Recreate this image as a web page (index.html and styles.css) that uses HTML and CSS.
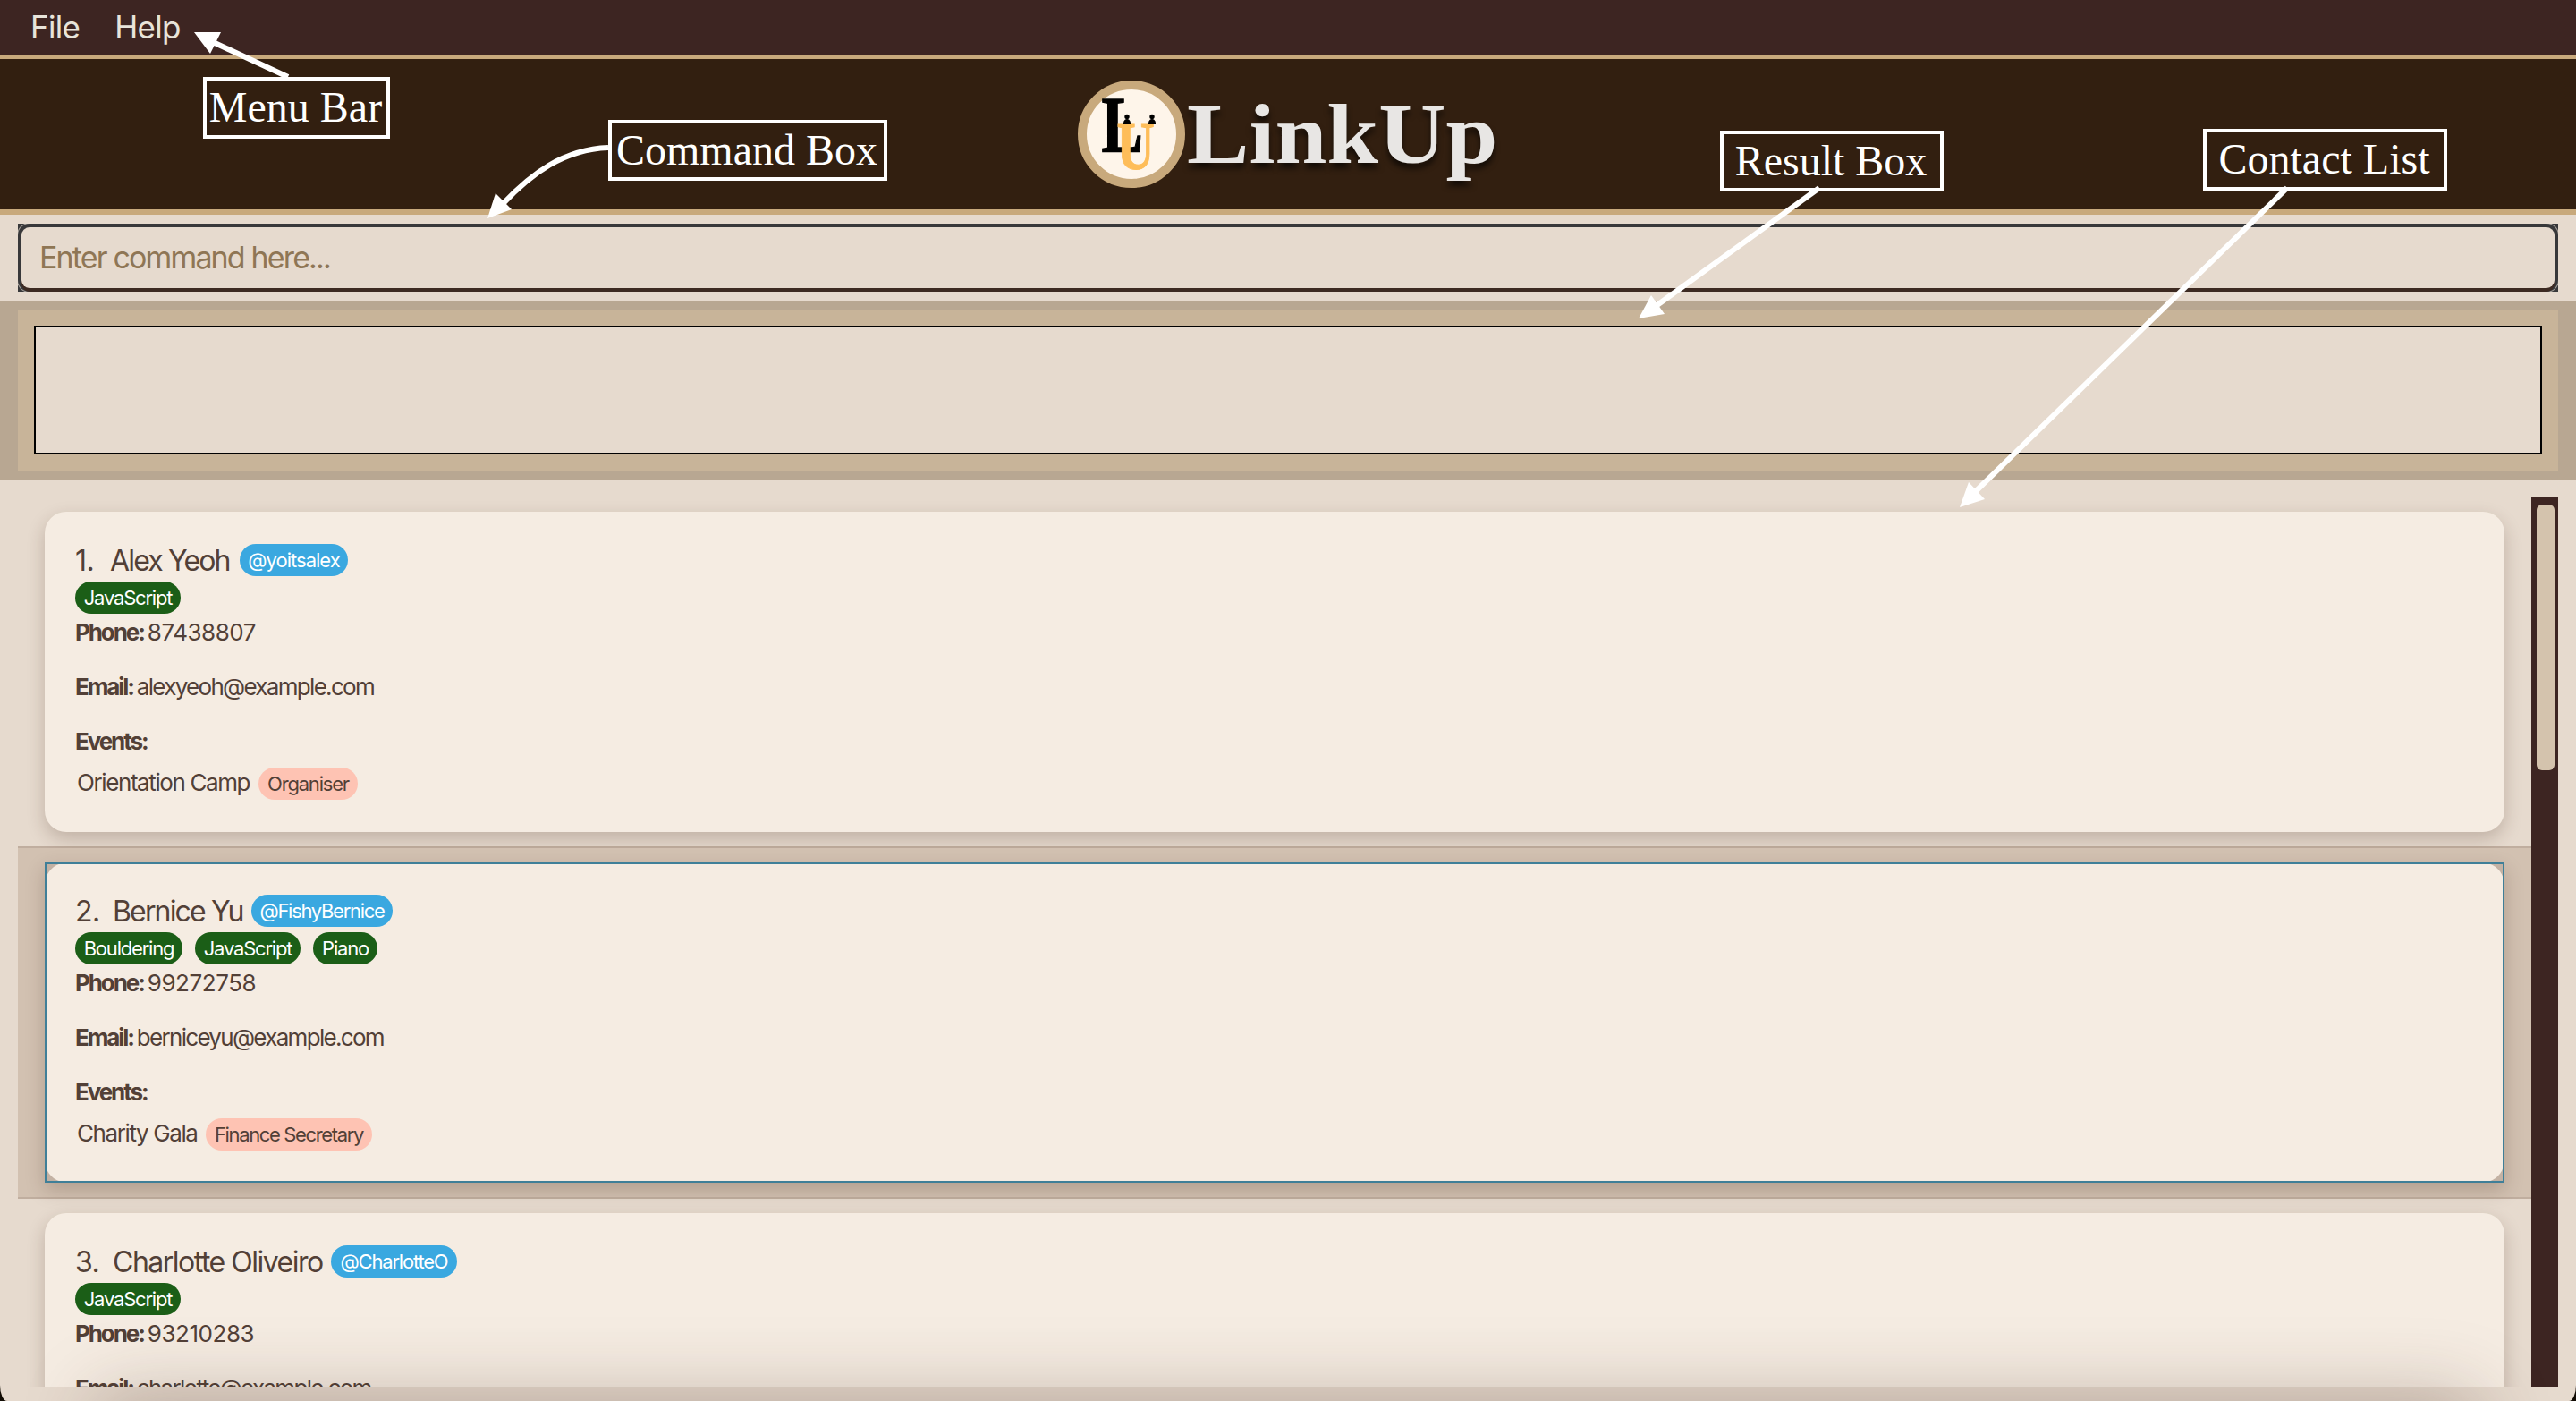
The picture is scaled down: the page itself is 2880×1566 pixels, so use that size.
FILE: index.html
```html
<!DOCTYPE html>
<html lang="en">
<head>
<meta charset="utf-8">
<title>LinkUp</title>
<link rel="stylesheet" href="styles.css">
</head>
<body>
<div class="app">
  <nav class="menu"><span class="file">File</span><span class="help">Help</span></nav>
  <header class="header">
    <svg class="logo" viewBox="0 0 120 120">
      <circle cx="60" cy="60" r="55" fill="#fef5ea" stroke="#c8a97c" stroke-width="10"/>
      <text class="logo-letter" transform="translate(26.500 79) scale(.78 1)" font-size="89" fill="#000" stroke="#000" stroke-width="1.400">L</text>
      <text class="logo-letter" transform="translate(43.500 98.500) scale(.77 1)" font-size="76" fill="#febd59" stroke="#febd59" stroke-width="1">U</text>
      <g fill="#000">
        <circle cx="55" cy="40.500" r="2.700"/><path d="M51 49v-2q1-4 4-4t4 4v2z"/>
        <circle cx="83" cy="40.500" r="2.700"/><path d="M79 49v-2q1-4 4-4t4 4v2z"/>
      </g>
    </svg>
    <h1 class="brand">LinkUp</h1>
  </header>
  <div class="command"><div class="command-box"><div class="command-input">Enter command here...</div></div></div>
  <section class="result"><div class="result-frame"><div class="result-box"></div></div></section>
  <main class="contacts">
    <div class="list">
      <div class="cell"><article class="card">
        <div class="title"><span class="num">1.</span><span class="name n1">Alex Yeoh</span><span class="pill handle h1">@yoitsalex</span></div>
        <div class="tags"><span class="pill tag js">JavaScript</span></div>
        <p class="field phone"><b>Phone:</b><span class="digits">87438807</span></p>
        <p class="field email"><b>Email:</b><span>alexyeoh@example.com</span></p>
        <p class="field events"><b>Events:</b></p>
        <div class="event"><span class="ev1">Orientation Camp</span><span class="pill role r1">Organiser</span></div>
      </article></div>
      <div class="cell selected"><article class="card">
        <div class="title"><span class="num wide">2.</span><span class="name n2">Bernice Yu</span><span class="pill handle h2">@FishyBernice</span></div>
        <div class="tags"><span class="pill tag bo">Bouldering</span><span class="pill tag js">JavaScript</span><span class="pill tag pi">Piano</span></div>
        <p class="field phone"><b>Phone:</b><span class="digits">99272758</span></p>
        <p class="field email"><b>Email:</b><span>berniceyu@example.com</span></p>
        <p class="field events"><b>Events:</b></p>
        <div class="event"><span class="ev2">Charity Gala</span><span class="pill role r2">Finance Secretary</span></div>
      </article></div>
      <div class="cell"><article class="card">
        <div class="title"><span class="num wide">3.</span><span class="name n3">Charlotte Oliveiro</span><span class="pill handle h3">@CharlotteO</span></div>
        <div class="tags"><span class="pill tag js">JavaScript</span></div>
        <p class="field phone"><b>Phone:</b><span class="digits">93210283</span></p>
        <p class="field email"><b>Email:</b><span>charlotte@example.com</span></p>
      </article></div>
    </div>
    <div class="scrollbar"><div class="thumb"></div></div>
  </main>
  <div class="bottom-shade"></div>
</div>
<svg class="arrows" viewBox="0 0 2880 1566">
  <g fill="none" stroke="#fff" stroke-width="6">
    <path d="M322 86L238 47"/>
    <path d="M680 165C630 167 594 194 562 228"/>
    <path d="M2034 210L1850 343"/>
    <path d="M2557 210L2208 550"/>
  </g>
  <g fill="#fff">
    <path d="M217 36H247L235 60z"/>
    <path d="M545 244L554 216L572 234z"/>
    <path d="M1832 356L1846 330L1861 351z"/>
    <path d="M2191 567L2201 539L2219 558z"/>
  </g>
</svg>
<div class="label menu-label">Menu Bar</div>
<div class="label command-label">Command Box</div>
<div class="label result-label">Result Box</div>
<div class="label list-label">Contact List</div>
</body>
</html>
```
FILE: styles.css
```css
* { box-sizing: border-box; }
html { background: #120c04; }
body { margin: 0; width: 2880px; height: 1566px; position: relative; overflow: hidden; font-family: Inter, "Liberation Sans", sans-serif; }
.app { position: relative; width: 2880px; height: 1566px; display: flex; flex-direction: column; background: #e6dace; border-radius: 0 0 8px 8px / 0 0 18px 18px; overflow: hidden; }
.menu { flex: none; height: 66px; padding: 1px 0 4px 34px; display: flex; align-items: center; gap: 39px; background: #3d2522; border-bottom: 4px solid #c8a97c; color: #e8e4da; font-size: 35px; letter-spacing: -.7px; line-height: 58px; }
.header { flex: none; height: 174px; display: flex; align-items: center; justify-content: flex-start; padding-left: 1205px; background: #321f10; border-bottom: 6px solid #c8a97c; }
.logo { flex: none; width: 120px; height: 120px; }
.logo-letter { font-family: "Liberation Serif", serif; font-weight: 700; }
.brand { margin: 0 0 0 2px; font: 700 96px/120px "Liberation Serif", serif; color: #e8e6e4; transform: scaleX(1.085); transform-origin: 0 50%; text-shadow: 0 6px 6px rgba(0,0,0,.6); }
.command { flex: none; height: 96px; padding: 10px 20px; }
.command-box { height: 76px; padding: 4px; background: #38383a; overflow: hidden; }
.command-input { height: 68px; background: #e6dace; border-radius: 9px; box-shadow: 0 4px 0 0 #3d2a22, 0 0 0 4px #38383a, 0 0 0 5px #a8a29c; padding: 0 0 2px 20px; display: flex; align-items: center; color: #8f7655; font-size: 34px; letter-spacing: -1.85px; }
.result { flex: none; height: 200px; padding: 10px 20px; background: #b8a792; }
.result-frame { height: 180px; padding: 18px; background: #c8b499; }
.result-box { height: 144px; border: 2px solid #000; background: #e6dace; }
.contacts { flex: none; padding: 0 20px; display: flex; margin-top: 20px; height: 994px; overflow: hidden; }
.list { width: 2810px; flex: none; }
.cell { height: 392px; padding: 16px 30px; border-bottom: 2px solid transparent; }
.cell:first-child { border-color: #c0ae9f; }
.selected { background: #d2c1b1; border-color: #c0ae9f; }
.card { height: 358px; padding: 36px 34px; border-radius: 24px; background: #f5ece2; color: #524037; box-shadow: 0 8px 20px rgba(60,30,20,.22); }
.selected .card { outline: 2px solid #3f7f98; outline-offset: -2px; border-radius: 0; background: radial-gradient(circle at 24px 24px, #f5ece2 23px, #c3b2a4 24px) 0 0/24px 24px no-repeat, radial-gradient(circle at 0 24px, #f5ece2 23px, #c3b2a4 24px) 100% 0/24px 24px no-repeat, radial-gradient(circle at 24px 0, #f5ece2 23px, #c3b2a4 24px) 0 100%/24px 24px no-repeat, radial-gradient(circle at 0 0, #f5ece2 23px, #c3b2a4 24px) 100% 100%/24px 24px no-repeat, #f5ece2; }
.title { display: flex; height: 36px; line-height: 38px; font-size: 32px; white-space: pre; }
.num { flex: none; width: 39px; letter-spacing: -.5px; }
.wide { width: 42px; }
.name { letter-spacing: -1.85px; }
.n1 { width: 145px; }
.n2 { width: 155px; }
.n3 { width: 244px; letter-spacing: -1.5px; }
.pill { display: block; flex: none; height: 36px; line-height: 37px; border-radius: 18px; font-size: 22px; letter-spacing: -1.2px; white-space: pre; text-align: center; }
.handle { background: #3aa8e0; color: #fff; }
.h1 { width: 121px; letter-spacing: -1px; }
.h2 { width: 158px; letter-spacing: -1.3px; }
.h3 { width: 141px; }
.tags { display: flex; gap: 14px; margin-top: 6px; height: 36px; }
.tag { background: #1b5e17; color: #fff; }
.js { width: 118px; }
.bo { width: 120px; }
.pi { width: 72px; }
.field { margin: 0; height: 61px; line-height: 42px; font-size: 26px; letter-spacing: -1.7px; display: flex; gap: 4px; white-space: pre; }
.field b { letter-spacing: -2.1px; }
.field .digits { letter-spacing: -.45px; }
.event { display: flex; margin-top: -11px; height: 36px; line-height: 34px; font-size: 26px; letter-spacing: -1.4px; padding-left: 2px; white-space: pre; }
.event .pill { line-height: 37px; }
.ev1 { width: 203px; }
.ev2 { width: 144px; }
.role { background: #fec3b3; }
.r1 { width: 111px; }
.r2 { width: 186px; letter-spacing: -1.35px; }
.scrollbar { width: 30px; background: #3d2522; padding: 8px 4px 0 6px; }
.thumb { height: 297px; background: #d4c3ad; border-radius: 6px; }
.bottom-shade { position: absolute; left: 130px; right: 130px; top: 1580px; height: 80px; box-shadow: 0 0 84px 20px rgba(70,40,30,.28); }
.arrows { position: absolute; left: 0; top: 0; width: 2880px; height: 1566px; }
.label { position: absolute; border: 4px solid #fff; color: #fff; font: 48px/60px "Liberation Serif", serif; padding-right: 2px; text-align: center; white-space: nowrap; }
.menu-label { left: 227px; top: 86px; width: 209px; height: 69px; }
.command-label { left: 680px; top: 134px; width: 312px; height: 68px; }
.result-label { left: 1923px; top: 146px; width: 250px; height: 68px; }
.list-label { left: 2463px; top: 144px; width: 273px; height: 69px; }
```
